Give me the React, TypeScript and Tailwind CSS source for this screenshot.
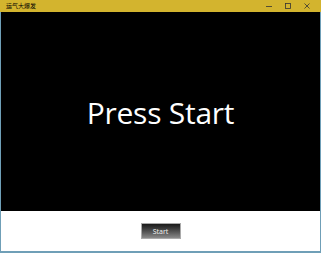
export default function App() {
  return (
    <div className="w-[321px] h-[253px] flex flex-col bg-[#6f9fb7] px-px pb-[2px] font-['Noto_Sans',sans-serif]">
      <div className="h-[12px] flex items-center bg-[#d3b42e] -mx-px px-[6px]">
        <span className="text-[6px] leading-none text-black font-['Noto_Sans_CJK_SC',sans-serif]">运气大爆发</span>
        <div className="ml-auto flex items-center gap-[13px] pr-[5px] text-[#333]">
          <svg width="6" height="6" viewBox="0 0 6 6"><path d="M0 3.5H6" stroke="#333" strokeWidth="0.8" /></svg>
          <svg width="6" height="6" viewBox="0 0 6 6"><rect x="0.5" y="0.5" width="5" height="5" fill="none" stroke="#333" strokeWidth="0.8" /></svg>
          <svg width="6" height="6" viewBox="0 0 6 6"><path d="M0.5 0.5L5.5 5.5M5.5 0.5L0.5 5.5" stroke="#333" strokeWidth="0.8" /></svg>
        </div>
      </div>
      <div className="h-[199px] bg-black flex items-center justify-center">
        <span className="text-white text-[30px] leading-none font-['Open_Sans',sans-serif] tracking-[-0.25px] mt-[3px]">Press Start</span>
      </div>
      <div className="flex-1 bg-white flex items-center justify-center">
        <button className="w-[40px] h-[16px] bg-gradient-to-b from-[#1a1a1a] to-[#8a8a8a] border border-[#aaa] text-[#eee] text-[7px] leading-none">Start</button>
      </div>
    </div>
  );
}
